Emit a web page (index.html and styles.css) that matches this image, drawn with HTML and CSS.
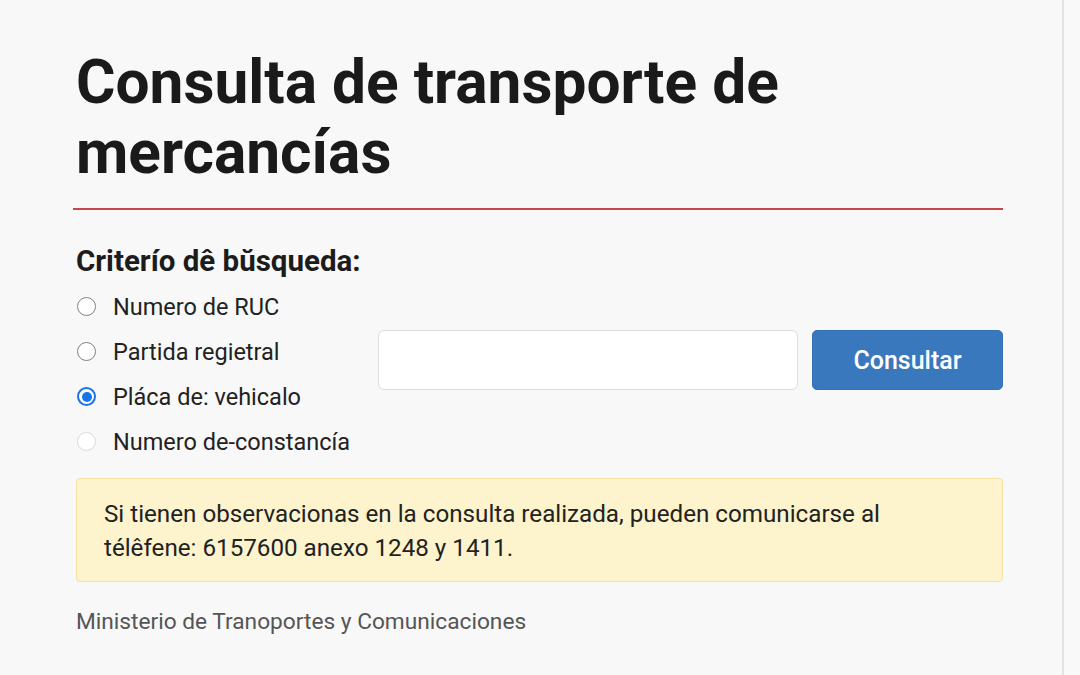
FILE: index.html
```html
<!DOCTYPE html>
<html lang="es">
<head>
<meta charset="utf-8">
<title>Consulta de transporte de mercancías</title>
<link rel="stylesheet" href="styles.css">
</head>
<body>
<div class="page">
  <main class="panel">
    <h1 class="title">Consulta de transporte de mercancías</h1>
    <hr class="rule">
    <h2 class="criteria">Criterío dê bŭsqueda:</h2>
    <div class="search">
      <div class="options">
        <label class="opt"><span class="radio"></span>Numero de RUC</label>
        <label class="opt"><span class="radio"></span>Partida regietral</label>
        <label class="opt"><span class="radio checked"></span>Pláca de: vehicalo</label>
        <label class="opt"><span class="radio faint"></span>Numero de-constancía</label>
      </div>
      <div class="field"></div>
      <button class="btn">Consultar</button>
    </div>
    <div class="alert">Si tienen observacionas en la consulta realizada, pueden comunicarse al télêfene: 6157600 anexo 1248 y 1411.</div>
    <p class="footer">Ministerio de Tranoportes y Comunicaciones</p>
  </main>
</div>
</body>
</html>
```
FILE: styles.css
```css
html, body {
  margin: 0;
  padding: 0;
  background: #f9f9f9;
  font-family: Roboto, "Liberation Sans", sans-serif;
  color: #1c1c1c;
}
.page {
  display: flex;
  height: 675px;
  overflow: hidden;
}
.panel {
  width: 1064px;
  box-sizing: border-box;
  border-right: 2px solid #e2e2e2;
  padding: 48px 59px 0 76px;
  background: #f8f8f8;
}
.title {
  margin: 0;
  font-size: 60.4px;
  font-weight: 700;
  line-height: 70px;
  color: #1a1a1a;
  width: 780px;
}
.rule {
  margin: 20px 0 0 -3px;
  border: 0;
  height: 2px;
  background: #c8464b;
}
.criteria {
  margin: 34px 0 0;
  font-size: 29.5px;
  font-weight: 700;
  line-height: 34px;
  color: #1c1c1c;
}
.search {
  display: flex;
  align-items: flex-start;
  margin-top: 6px;
}
.options {
  display: flex;
  flex-direction: column;
  width: 302px;
}
.opt {
  display: flex;
  align-items: center;
  height: 45px;
  font-size: 23.5px;
  color: #222;
  white-space: nowrap;
}
.radio {
  width: 19px;
  height: 19px;
  border: 1.5px solid #808080;
  border-radius: 50%;
  background: #fff;
  margin-right: 17px;
  margin-left: 1px;
  box-sizing: border-box;
  flex: none;
  position: relative;
}
.radio.checked {
  border: 2px solid #1a73e8;
}
.radio.checked::after {
  content: "";
  position: absolute;
  left: 2.5px;
  top: 2.5px;
  width: 10px;
  height: 10px;
  border-radius: 50%;
  background: #1a73e8;
}
.radio.faint {
  border-color: #dadada;
}
.field {
  width: 420px;
  height: 60px;
  box-sizing: border-box;
  border: 1px solid #dcdcdc;
  border-radius: 6px;
  background: #fff;
  margin-top: 46px;
}
.btn {
  margin-top: 46px;
  margin-left: 14px;
  width: 191px;
  height: 60px;
  border: 1px solid #3470b3;
  border-radius: 5px;
  background: #3a78bd;
  color: #fff;
  font-family: Roboto, "Liberation Sans", sans-serif;
  font-size: 25px;
  font-weight: 500;
  padding: 0;
}
.alert {
  margin-top: 14px;
  box-sizing: border-box;
  height: 104px;
  padding: 18px 60px 18px 27px;
  background: #fdf3cc;
  border: 1px solid #f3e2a3;
  border-radius: 4px;
  font-size: 24.2px;
  line-height: 34px;
  color: #222;
}
.footer {
  margin: 26px 0 0;
  font-size: 22.7px;
  line-height: 28px;
  color: #555;
}
```
